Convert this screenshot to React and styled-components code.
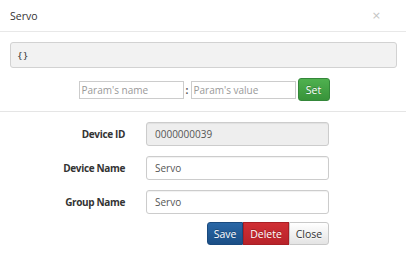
import React from "react";
import styled, { createGlobalStyle } from "styled-components";

const Global = createGlobalStyle`
  html, body { margin: 0; padding: 0; background: #fff; }
  body { font-family: "Open Sans", "Noto Sans", sans-serif; font-size: 10px; color: #333; }
  * { box-sizing: border-box; }
`;

const Modal = styled.div`
  width: 406px;
  height: 262px;
  background: #fff;
  display: flex;
  flex-direction: column;
`;

const Header = styled.div`
  height: 32px;
  padding: 0 10px;
  display: flex;
  align-items: center;
  justify-content: space-between;
  border-bottom: 1px solid #e8e8e8;
`;

const Title = styled.div`
  font-size: 10.5px;
  color: #333;
  padding-top: 1px;
`;

const CloseX = styled.span`
  font-family: "DejaVu Sans", sans-serif;
  font-size: 11px;
  color: #c4c4c4;
  margin-right: 15px;
`;

const Body = styled.div`
  padding: 10px 9px 0 10px;
  display: flex;
  flex-direction: column;
`;

const Pre = styled.div`
  height: 26px;
  background: #f2f2f2;
  border: 1px solid #d2d2d2;
  border-radius: 3px;
  padding: 0 6px;
  display: flex;
  align-items: center;
  font-family: "DejaVu Sans Mono", monospace;
  font-size: 9.5px;
  color: #333;
`;

const ParamRow = styled.div`
  margin-top: 10px;
  display: flex;
  align-items: center;
  justify-content: center;
  padding-left: 1px;
`;

const SmallInput = styled.div`
  width: 105px;
  height: 18px;
  border: 1px solid #ccc;
  background: #fff;
  display: flex;
  align-items: center;
  padding: 0 2px;
  color: #999;
  font-size: 10px;
`;

const Colon = styled.span`
  width: 7px;
  text-align: center;
  font-weight: bold;
  color: #555;
`;

const Btn = styled.div`
  height: 23px;
  display: flex;
  align-items: center;
  justify-content: center;
  font-size: 10.5px;
  color: ${(p) => (p.$light ? "#333" : "#fff")};
  background: ${(p) => p.$bg};
  border: 1px solid ${(p) => p.$border};
  border-radius: ${(p) => p.$radius || "3px"};
  text-shadow: ${(p) => (p.$light ? "0 1px 0 rgba(255,255,255,.7)" : "0 -1px 0 rgba(0,0,0,.25)")};
  width: ${(p) => p.$w}px;
`;

const SetBtn = styled(Btn)`
  margin-left: 2px;
`;

const Divider = styled.div`
  margin-top: 10px;
  margin-left: -10px;
  margin-right: -9px;
  border-top: 1px solid #e5e5e5;
`;

const Form = styled.div`
  margin-top: 10px;
  display: grid;
  grid-template-columns: 115px 183px;
  column-gap: 21px;
  row-gap: 10px;
  align-items: center;
`;

const Label = styled.div`
  text-align: right;
  font-weight: bold;
  font-size: 10px;
  letter-spacing: -0.35px;
  color: #333;
`;

const Field = styled.div`
  height: 24px;
  border: 1px solid #ccc;
  border-radius: 3px;
  background: ${(p) => (p.$disabled ? "#eee" : "#fff")};
  display: flex;
  align-items: center;
  padding: 0 8px;
  color: #555;
  font-size: 10px;
  box-shadow: inset 0 1px 1px rgba(0,0,0,.06);
`;

const Actions = styled.div`
  grid-column: 2;
  display: flex;
  justify-content: flex-end;
  margin-top: -2px;
`;

export default function App() {
  return (
    <>
      <Global />
      <Modal>
        <Header>
          <Title>Servo</Title>
          <CloseX>×</CloseX>
        </Header>
        <Body>
          <Pre>{"{}"}</Pre>
          <ParamRow>
            <SmallInput>Param's name</SmallInput>
            <Colon>:</Colon>
            <SmallInput>Param's value</SmallInput>
            <SetBtn $w={32} $bg="linear-gradient(#4fb14f, #38933a)" $border="#34873a">
              Set
            </SetBtn>
          </ParamRow>
          <Divider />
          <Form>
            <Label>Device ID</Label>
            <Field $disabled>0000000039</Field>
            <Label>Device Name</Label>
            <Field>Servo</Field>
            <Label>Group Name</Label>
            <Field>Servo</Field>
            <Actions>
              <Btn
                $w={36}
                $bg="linear-gradient(#2a67a6, #1b4f86)"
                $border="#1a4a7e"
                $radius="3px 0 0 3px"
              >
                Save
              </Btn>
              <Btn $w={46} $bg="linear-gradient(#d02f34, #b8232a)" $border="#a81f25" $radius="0">
                Delete
              </Btn>
              <Btn
                $w={40}
                $light
                $bg="linear-gradient(#ffffff, #e4e4e4)"
                $border="#c8c8c8"
                $radius="0 3px 3px 0"
              >
                Close
              </Btn>
            </Actions>
          </Form>
        </Body>
      </Modal>
    </>
  );
}
